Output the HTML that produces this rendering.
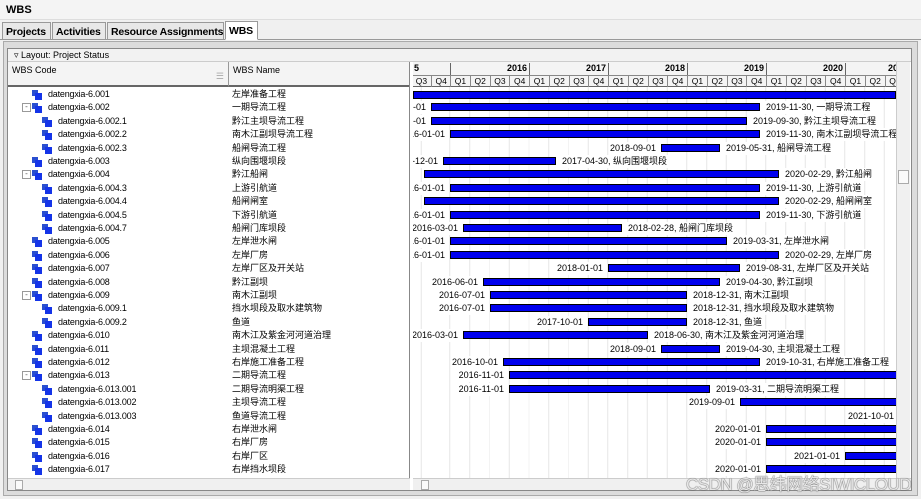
<!DOCTYPE html>
<html><head><meta charset="utf-8"><style>
*{box-sizing:border-box;margin:0;padding:0}
body{width:921px;height:499px;background:#f0f0f0;font-family:"Liberation Sans","Noto Sans CJK SC",sans-serif;font-size:10px;color:#000;position:relative;overflow:hidden}
.abs{position:absolute}
.title{left:0;top:0;width:921px;height:20px;background:#f4f4f4;border-bottom:1px solid #ddd;font-weight:bold;font-size:11px;padding:4px 6px}
.tabs{left:0;top:20px;width:921px;height:20px;background:#f0f0f0;border-bottom:1px solid #999}
.tab{position:absolute;top:2px;height:18px;border:1px solid #999;background:#e8e8e8;font-weight:bold;font-size:10.5px;padding:3px 3px;white-space:nowrap;overflow:hidden;letter-spacing:-0.2px}
.frame{left:3px;top:41px;width:915px;height:455px;background:#dcdcdc;border:1px solid #aaa}
.inner{left:7px;top:48px;width:905px;height:443px;border:1px solid #888;background:#fff}
.lay{left:8px;top:49px;width:903px;height:13px;background:#f2f2f2;border-bottom:1px solid #ccc;font-size:9px;padding:1px 6px}
.left{left:8px;top:62px;width:402px;height:416px;background:#fff;overflow:hidden;border-right:1px solid #888}
.hdr{left:0;top:0;height:25px;background:#f4f4f4;border-bottom:2px solid #666;font-size:9px;padding:3px 4px}
.r{position:absolute;left:0;width:402px;height:13px;font-size:9px;line-height:13px}
.code{position:absolute;white-space:nowrap;letter-spacing:-0.2px}
.nm{position:absolute;left:224px;white-space:nowrap}
.ic{position:absolute;width:11px;height:10px;top:2px}
.ic:before{content:"";position:absolute;left:0;top:0;width:6px;height:6px;background:#2a4fd0}
.ic:after{content:"";position:absolute;left:3px;top:3px;width:7px;height:7px;background:#1434e8}
.pm{position:absolute;width:9px;height:9px;border:1px solid #999;background:#fff;top:2px;font-size:8px;line-height:6px;text-align:center;color:#555}
.gantt{left:413px;top:62px;width:483px;height:416px;background:#fff;overflow:hidden}
.gh{left:0;top:0;width:483px;height:25px;background:#f4f4f4;border-bottom:1px solid #666;font-size:9px}
.grid{left:0;top:25px;width:483px;height:391px;background-image:repeating-linear-gradient(90deg,transparent 0,transparent 18.75px,#e6e6e6 18.75px,#e6e6e6 19.75px)}
.b{position:absolute;height:8px;background:#0000ee;border:1px solid #000}
.sl,.el{position:absolute;font-size:9px;white-space:nowrap;line-height:13px;background:#fff;padding:0 1px}
.yr{position:absolute;top:1px;height:12px;border-left:1px solid #666;text-align:right;padding-right:2px;font-weight:bold;font-size:9px}
.q{position:absolute;top:13px;height:12px;width:19.75px;border-left:1px solid #888;border-top:1px solid #888;text-align:center;font-size:8.5px}
.vs{left:896px;top:62px;width:14px;height:416px;background:#f0f0f0;border-left:1px solid #ccc}
.hs{top:478px;height:12px;background:#f0f0f0;border-top:1px solid #ccc}
.wm{right:10px;top:470px;font-size:17px;color:rgba(255,255,255,.85);text-shadow:0 0 1px #555,0 0 1px #555;letter-spacing:-0.5px}
</style></head><body>
<div class="abs title">WBS</div>
<div class="abs tabs">
<div class="tab" style="left:2px;width:49px">Projects</div>
<div class="tab" style="left:52px;width:54px">Activities</div>
<div class="tab" style="left:107px;width:117px">Resource Assignments</div>
<div class="tab" style="left:225px;width:33px;background:#fff;border-bottom-color:#fff;height:19px;top:1px">WBS</div>
</div>
<div class="abs frame"></div>
<div class="abs inner"></div>
<div class="abs lay">▿ Layout: Project Status</div>
<div class="abs left">
<div class="abs hdr" style="width:221px;border-right:1px solid #999">WBS Code<span style="position:absolute;right:4px;top:9px;color:#aaa">☰</span></div>
<div class="abs hdr" style="left:221px;width:181px">WBS Name</div>
<div style="position:absolute;left:0;top:26px;width:402px;height:400px">
<div class="r" style="top:0"><div class="ic" style="left:24px"></div><div class="code" style="left:40px">datengxia-6.001</div><div class="nm">左岸准备工程</div></div>
<div class="r" style="top:13.4px"><div class="pm" style="left:14px">-</div><div class="ic" style="left:24px"></div><div class="code" style="left:40px">datengxia-6.002</div><div class="nm">一期导流工程</div></div>
<div class="r" style="top:26.8px"><div class="ic" style="left:34px"></div><div class="code" style="left:50px">datengxia-6.002.1</div><div class="nm">黔江主坝导流工程</div></div>
<div class="r" style="top:40.2px"><div class="ic" style="left:34px"></div><div class="code" style="left:50px">datengxia-6.002.2</div><div class="nm">南木江副坝导流工程</div></div>
<div class="r" style="top:53.6px"><div class="ic" style="left:34px"></div><div class="code" style="left:50px">datengxia-6.002.3</div><div class="nm">船闸导流工程</div></div>
<div class="r" style="top:67px"><div class="ic" style="left:24px"></div><div class="code" style="left:40px">datengxia-6.003</div><div class="nm">纵向围堰坝段</div></div>
<div class="r" style="top:80.4px"><div class="pm" style="left:14px">-</div><div class="ic" style="left:24px"></div><div class="code" style="left:40px">datengxia-6.004</div><div class="nm">黔江船闸</div></div>
<div class="r" style="top:93.8px"><div class="ic" style="left:34px"></div><div class="code" style="left:50px">datengxia-6.004.3</div><div class="nm">上游引航道</div></div>
<div class="r" style="top:107.2px"><div class="ic" style="left:34px"></div><div class="code" style="left:50px">datengxia-6.004.4</div><div class="nm">船闸闸室</div></div>
<div class="r" style="top:120.6px"><div class="ic" style="left:34px"></div><div class="code" style="left:50px">datengxia-6.004.5</div><div class="nm">下游引航道</div></div>
<div class="r" style="top:134px"><div class="ic" style="left:34px"></div><div class="code" style="left:50px">datengxia-6.004.7</div><div class="nm">船闸门库坝段</div></div>
<div class="r" style="top:147.4px"><div class="ic" style="left:24px"></div><div class="code" style="left:40px">datengxia-6.005</div><div class="nm">左岸泄水闸</div></div>
<div class="r" style="top:160.8px"><div class="ic" style="left:24px"></div><div class="code" style="left:40px">datengxia-6.006</div><div class="nm">左岸厂房</div></div>
<div class="r" style="top:174.2px"><div class="ic" style="left:24px"></div><div class="code" style="left:40px">datengxia-6.007</div><div class="nm">左岸厂区及开关站</div></div>
<div class="r" style="top:187.6px"><div class="ic" style="left:24px"></div><div class="code" style="left:40px">datengxia-6.008</div><div class="nm">黔江副坝</div></div>
<div class="r" style="top:201px"><div class="pm" style="left:14px">-</div><div class="ic" style="left:24px"></div><div class="code" style="left:40px">datengxia-6.009</div><div class="nm">南木江副坝</div></div>
<div class="r" style="top:214.4px"><div class="ic" style="left:34px"></div><div class="code" style="left:50px">datengxia-6.009.1</div><div class="nm">挡水坝段及取水建筑物</div></div>
<div class="r" style="top:227.8px"><div class="ic" style="left:34px"></div><div class="code" style="left:50px">datengxia-6.009.2</div><div class="nm">鱼道</div></div>
<div class="r" style="top:241.2px"><div class="ic" style="left:24px"></div><div class="code" style="left:40px">datengxia-6.010</div><div class="nm">南木江及紫金河河道治理</div></div>
<div class="r" style="top:254.6px"><div class="ic" style="left:24px"></div><div class="code" style="left:40px">datengxia-6.011</div><div class="nm">主坝混凝土工程</div></div>
<div class="r" style="top:268px"><div class="ic" style="left:24px"></div><div class="code" style="left:40px">datengxia-6.012</div><div class="nm">右岸施工准备工程</div></div>
<div class="r" style="top:281.4px"><div class="pm" style="left:14px">-</div><div class="ic" style="left:24px"></div><div class="code" style="left:40px">datengxia-6.013</div><div class="nm">二期导流工程</div></div>
<div class="r" style="top:294.8px"><div class="ic" style="left:34px"></div><div class="code" style="left:50px">datengxia-6.013.001</div><div class="nm">二期导流明渠工程</div></div>
<div class="r" style="top:308.2px"><div class="ic" style="left:34px"></div><div class="code" style="left:50px">datengxia-6.013.002</div><div class="nm">主坝导流工程</div></div>
<div class="r" style="top:321.6px"><div class="ic" style="left:34px"></div><div class="code" style="left:50px">datengxia-6.013.003</div><div class="nm">鱼道导流工程</div></div>
<div class="r" style="top:335px"><div class="ic" style="left:24px"></div><div class="code" style="left:40px">datengxia-6.014</div><div class="nm">右岸泄水闸</div></div>
<div class="r" style="top:348.4px"><div class="ic" style="left:24px"></div><div class="code" style="left:40px">datengxia-6.015</div><div class="nm">右岸厂房</div></div>
<div class="r" style="top:361.8px"><div class="ic" style="left:24px"></div><div class="code" style="left:40px">datengxia-6.016</div><div class="nm">右岸厂区</div></div>
<div class="r" style="top:375.2px"><div class="ic" style="left:24px"></div><div class="code" style="left:40px">datengxia-6.017</div><div class="nm">右岸挡水坝段</div></div>
</div>
</div>
<div class="abs gantt">
<div class="abs gh">
<div class="yr" style="left:-2px;width:39px;text-align:left;padding-left:2px">5</div>
<div class="yr" style="left:37px;width:79px">2016</div>
<div class="yr" style="left:116px;width:79px">2017</div>
<div class="yr" style="left:195px;width:79px">2018</div>
<div class="yr" style="left:274px;width:79px">2019</div>
<div class="yr" style="left:353px;width:79px">2020</div>
<div class="yr" style="left:432px;width:79px;text-align:left;padding-left:42px">2021</div>
<div class="q" style="left:-2px">Q3</div><div class="q" style="left:17.75px">Q4</div>
<div class="q" style="left:37px">Q1</div><div class="q" style="left:56.75px">Q2</div><div class="q" style="left:76.5px">Q3</div><div class="q" style="left:96.25px">Q4</div>
<div class="q" style="left:116px">Q1</div><div class="q" style="left:135.75px">Q2</div><div class="q" style="left:155.5px">Q3</div><div class="q" style="left:175.25px">Q4</div>
<div class="q" style="left:195px">Q1</div><div class="q" style="left:214.75px">Q2</div><div class="q" style="left:234.5px">Q3</div><div class="q" style="left:254.25px">Q4</div>
<div class="q" style="left:274px">Q1</div><div class="q" style="left:293.75px">Q2</div><div class="q" style="left:313.5px">Q3</div><div class="q" style="left:333.25px">Q4</div>
<div class="q" style="left:353px">Q1</div><div class="q" style="left:372.75px">Q2</div><div class="q" style="left:392.5px">Q3</div><div class="q" style="left:412.25px">Q4</div>
<div class="q" style="left:432px">Q1</div><div class="q" style="left:451.75px">Q2</div><div class="q" style="left:471.5px">Q3</div>
</div>
<div class="abs grid" style="background-position:17.75px 0"></div>
<div style="position:absolute;left:0;top:26px;width:483px;height:400px">
<div class="b" style="top:3px;left:0;width:483px"></div>
<div class="r" style="top:13.4px;width:483px"><span class="sl" style="right:469px">2015-07-01</span><div class="b" style="top:2px;left:18px;width:329px"></div><span class="el" style="left:352px">2019-11-30, 一期导流工程</span></div>
<div class="r" style="top:26.8px;width:483px"><span class="sl" style="right:469px">2015-07-01</span><div class="b" style="top:2px;left:18px;width:316px"></div><span class="el" style="left:339px">2019-09-30, 黔江主坝导流工程</span></div>
<div class="r" style="top:40.2px;width:483px"><span class="sl" style="right:450px">2016-01-01</span><div class="b" style="top:2px;left:37px;width:310px"></div><span class="el" style="left:352px">2019-11-30, 南木江副坝导流工程</span></div>
<div class="r" style="top:53.6px;width:483px"><span class="sl" style="right:239px">2018-09-01</span><div class="b" style="top:2px;left:248px;width:59px"></div><span class="el" style="left:312px">2019-05-31, 船闸导流工程</span></div>
<div class="r" style="top:67px;width:483px"><span class="sl" style="right:457px">2015-12-01</span><div class="b" style="top:2px;left:30px;width:113px"></div><span class="el" style="left:148px">2017-04-30, 纵向围堰坝段</span></div>
<div class="r" style="top:80.4px;width:483px"><div class="b" style="top:2px;left:11px;width:355px"></div><span class="el" style="left:371px">2020-02-29, 黔江船闸</span></div>
<div class="r" style="top:93.8px;width:483px"><span class="sl" style="right:450px">2016-01-01</span><div class="b" style="top:2px;left:37px;width:310px"></div><span class="el" style="left:352px">2019-11-30, 上游引航道</span></div>
<div class="r" style="top:107.2px;width:483px"><div class="b" style="top:2px;left:11px;width:355px"></div><span class="el" style="left:371px">2020-02-29, 船闸闸室</span></div>
<div class="r" style="top:120.6px;width:483px"><span class="sl" style="right:450px">2016-01-01</span><div class="b" style="top:2px;left:37px;width:310px"></div><span class="el" style="left:352px">2019-11-30, 下游引航道</span></div>
<div class="r" style="top:134px;width:483px"><span class="sl" style="right:437px">2016-03-01</span><div class="b" style="top:2px;left:50px;width:159px"></div><span class="el" style="left:214px">2018-02-28, 船闸门库坝段</span></div>
<div class="r" style="top:147.4px;width:483px"><span class="sl" style="right:450px">2016-01-01</span><div class="b" style="top:2px;left:37px;width:277px"></div><span class="el" style="left:319px">2019-03-31, 左岸泄水闸</span></div>
<div class="r" style="top:160.8px;width:483px"><span class="sl" style="right:450px">2016-01-01</span><div class="b" style="top:2px;left:37px;width:329px"></div><span class="el" style="left:371px">2020-02-29, 左岸厂房</span></div>
<div class="r" style="top:174.2px;width:483px"><span class="sl" style="right:292px">2018-01-01</span><div class="b" style="top:2px;left:195px;width:132px"></div><span class="el" style="left:332px">2019-08-31, 左岸厂区及开关站</span></div>
<div class="r" style="top:187.6px;width:483px"><span class="sl" style="right:417px">2016-06-01</span><div class="b" style="top:2px;left:70px;width:237px"></div><span class="el" style="left:312px">2019-04-30, 黔江副坝</span></div>
<div class="r" style="top:201px;width:483px"><span class="sl" style="right:410px">2016-07-01</span><div class="b" style="top:2px;left:77px;width:197px"></div><span class="el" style="left:279px">2018-12-31, 南木江副坝</span></div>
<div class="r" style="top:214.4px;width:483px"><span class="sl" style="right:410px">2016-07-01</span><div class="b" style="top:2px;left:77px;width:197px"></div><span class="el" style="left:279px">2018-12-31, 挡水坝段及取水建筑物</span></div>
<div class="r" style="top:227.8px;width:483px"><span class="sl" style="right:312px">2017-10-01</span><div class="b" style="top:2px;left:175px;width:99px"></div><span class="el" style="left:279px">2018-12-31, 鱼道</span></div>
<div class="r" style="top:241.2px;width:483px"><span class="sl" style="right:437px">2016-03-01</span><div class="b" style="top:2px;left:50px;width:185px"></div><span class="el" style="left:240px">2018-06-30, 南木江及紫金河河道治理</span></div>
<div class="r" style="top:254.6px;width:483px"><span class="sl" style="right:239px">2018-09-01</span><div class="b" style="top:2px;left:248px;width:59px"></div><span class="el" style="left:312px">2019-04-30, 主坝混凝土工程</span></div>
<div class="r" style="top:268px;width:483px"><span class="sl" style="right:397px">2016-10-01</span><div class="b" style="top:2px;left:90px;width:257px"></div><span class="el" style="left:352px">2019-10-31, 右岸施工准备工程</span></div>
<div class="r" style="top:281.4px;width:483px"><span class="sl" style="right:391px">2016-11-01</span><div class="b" style="top:2px;left:96px;width:390px"></div></div>
<div class="r" style="top:294.8px;width:483px"><span class="sl" style="right:391px">2016-11-01</span><div class="b" style="top:2px;left:96px;width:201px"></div><span class="el" style="left:302px">2019-03-31, 二期导流明渠工程</span></div>
<div class="r" style="top:308.2px;width:483px"><span class="sl" style="right:160px">2019-09-01</span><div class="b" style="top:2px;left:327px;width:160px"></div></div>
<div class="r" style="top:321.6px;width:483px"><span class="sl" style="right:1px">2021-10-01</span></div>
<div class="r" style="top:335px;width:483px"><span class="sl" style="right:134px">2020-01-01</span><div class="b" style="top:2px;left:353px;width:134px"></div></div>
<div class="r" style="top:348.4px;width:483px"><span class="sl" style="right:134px">2020-01-01</span><div class="b" style="top:2px;left:353px;width:134px"></div></div>
<div class="r" style="top:361.8px;width:483px"><span class="sl" style="right:55px">2021-01-01</span><div class="b" style="top:2px;left:432px;width:55px"></div></div>
<div class="r" style="top:375.2px;width:483px"><span class="sl" style="right:134px">2020-01-01</span><div class="b" style="top:2px;left:353px;width:134px"></div></div>
</div>
</div>
<div class="abs vs"><div style="position:absolute;left:1px;top:108px;width:11px;height:14px;border:1px solid #aaa;background:#fafafa"></div></div>
<div class="abs hs" style="left:8px;width:402px"><div style="position:absolute;left:7px;top:1px;width:8px;height:10px;border:1px solid #aaa;background:#fafafa"></div></div>
<div class="abs hs" style="left:413px;width:498px"><div style="position:absolute;left:8px;top:1px;width:8px;height:10px;border:1px solid #aaa;background:#fafafa"></div></div>
<div class="abs wm">CSDN @思纬网络SIWICLOUD</div>
</body></html>
